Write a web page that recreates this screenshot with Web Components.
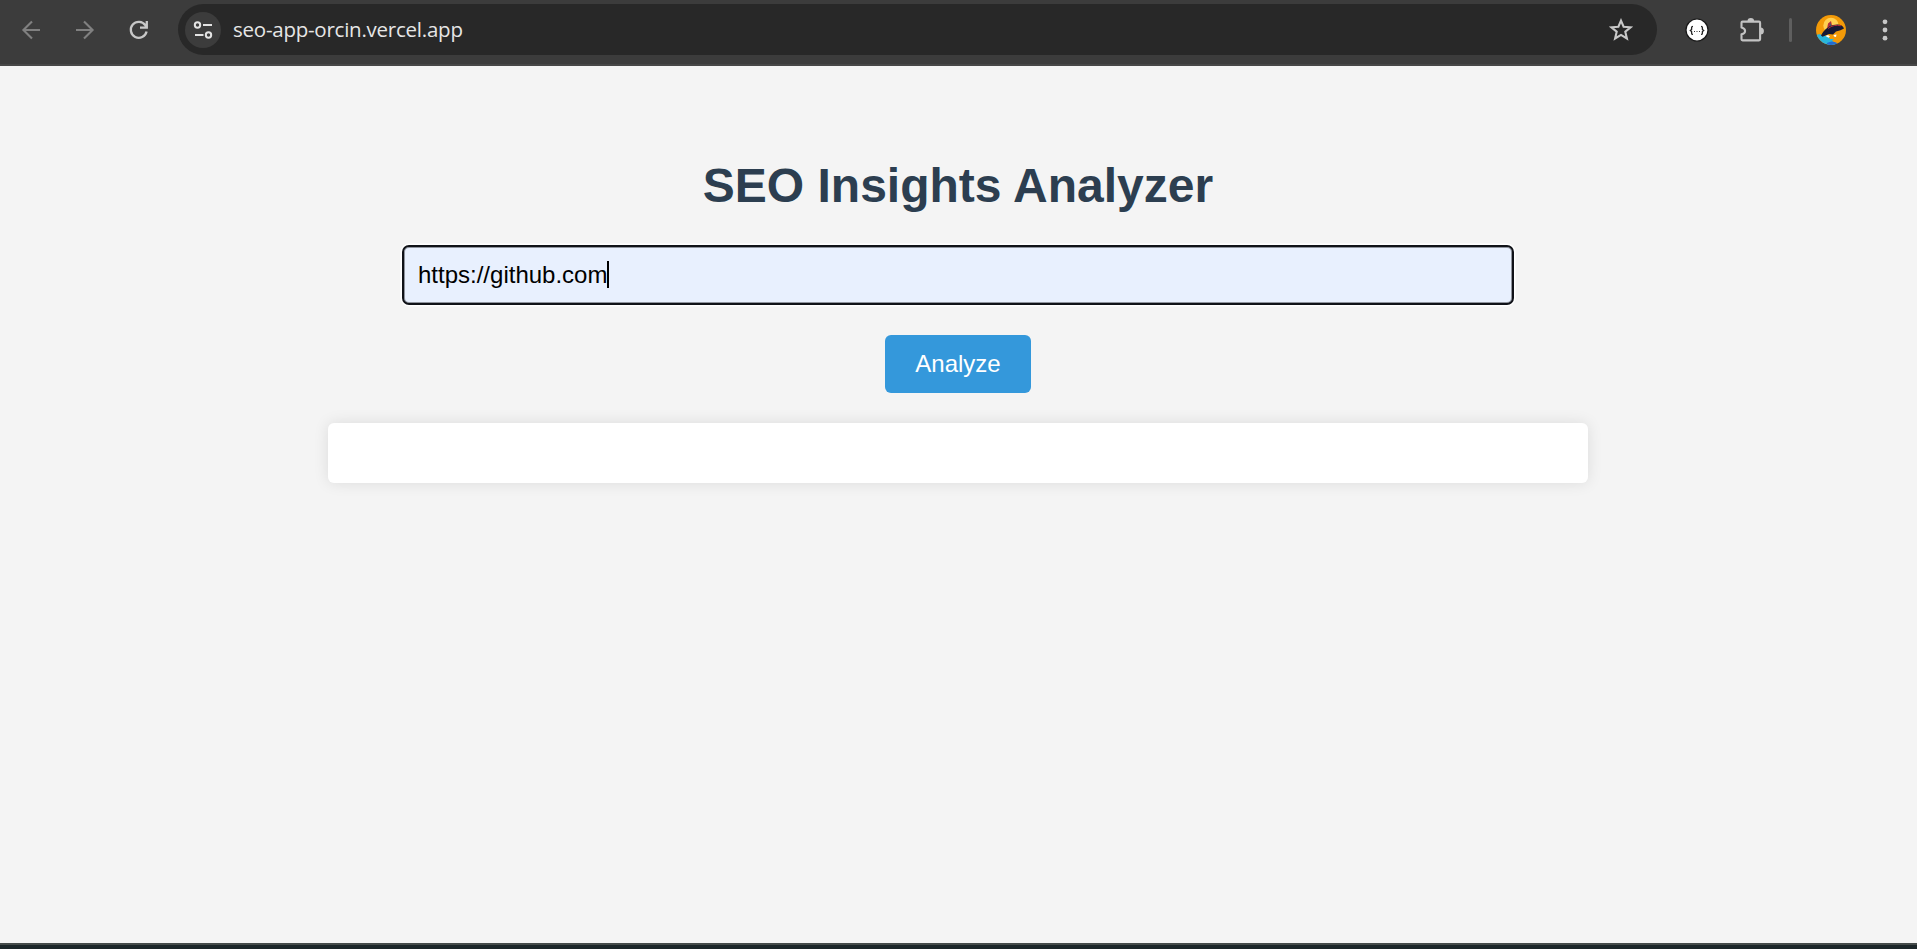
<!DOCTYPE html>
<html lang="en">
<head>
<meta charset="utf-8">
<title>SEO Insights Analyzer</title>
<style>
html,body{margin:0;height:100%;overflow:hidden;background:#f4f4f4}
</style>
</head>
<body>
<browser-window>
  <browser-toolbar slot="toolbar" url="seo-app-orcin.vercel.app"></browser-toolbar>
  <seo-app></seo-app>
</browser-window>
<script>
function define(name, html) {
  const template = document.createElement('template');
  template.innerHTML = html;
  customElements.define(name, class extends HTMLElement {
    constructor() {
      super();
      this.attachShadow({mode: 'open'}).append(template.content.cloneNode(true));
    }
    connectedCallback() {
      const url = this.shadowRoot.querySelector('[data-url]');
      if (url) url.textContent = this.getAttribute('url');
    }
  });
}

define('tool-icon', `
<style>
:host{display:block;flex:none;line-height:0}
::slotted(svg){display:block}
</style><slot></slot>`);

define('browser-toolbar', `
<style>
:host{display:flex;box-sizing:border-box;height:66px;padding:4px 21px 0 20px;background:#3c3c3c;border-bottom:2px solid #474747;align-items:flex-start}
.row{display:flex;align-items:center;height:51px;width:100%}
.nav{display:flex;gap:32px;width:158px;box-sizing:border-box}
.omni{display:flex;align-items:center;box-sizing:border-box;width:1479px;height:51px;border-radius:26px;background:#282828;padding:0 24px 0 7px}
.site{display:flex;align-items:center;justify-content:center;width:36px;height:36px;border-radius:50%;background:#3c3c3c}
.url{flex:1;margin-left:12px;padding-bottom:2px;font:20.5px/28px "Open Sans","Noto Sans",sans-serif;color:#e6e6e6;letter-spacing:-.24px;white-space:nowrap}
.ext{display:flex;align-items:center;flex:1;padding-left:28px}
.sep{width:3px;height:24px;border-radius:2px;background:#5f5f5f;margin:0 24px 0 24px}
</style>
<div class="row">
  <div class="nav">
    <tool-icon><svg width="22" height="22" viewBox="0 0 22 22" fill="none" stroke="#808080" stroke-width="2.1"><path d="M20 11H3.4M12 2.4L3.4 11L12 19.6"/></svg></tool-icon>
    <tool-icon><svg width="22" height="22" viewBox="0 0 22 22" fill="none" stroke="#808080" stroke-width="2.1"><path d="M2 11H18.6M10 2.4L18.6 11L10 19.6"/></svg></tool-icon>
    <tool-icon><svg width="22" height="22" viewBox="0 0 22 22" fill="none" stroke="#c8c8c8" stroke-width="2.3"><path d="M18.6 12.6A8 8 0 1 1 17.4 6.3L18.6 8.2M18.8 2V8.7H12"/></svg></tool-icon>
  </div>
  <div class="omni">
    <div class="site"><svg width="20" height="20" viewBox="0 0 20 20" fill="none" stroke="#e3e3e3" stroke-width="2"><circle cx="4.5" cy="5" r="2.7"/><path d="M10 5H19M2 15H10.5"/><circle cx="15.5" cy="15" r="2.7"/></svg></div>
    <span class="url" data-url></span>
    <tool-icon><svg width="24" height="24" viewBox="0 0 24 24" fill="none" stroke="#c8c8c8" stroke-width="2.1"><path d="M12 2.6L14.6 8.7L21.6 9.3L16.3 13.7L17.9 20.5L12 16.9L6.1 20.5L7.7 13.7L2.4 9.3L9.4 8.7Z"/></svg></tool-icon>
  </div>
  <div class="ext">
    <tool-icon><svg width="24" height="24" viewBox="0 0 24 24"><circle cx="12" cy="12" r="11" fill="#fff" stroke="#171717" stroke-width="1.2"/><g fill="none" stroke="#222" stroke-width="1.3"><path d="M8 8.4Q6.6 8.4 6.6 9.6V11.4L5.3 12.5L6.6 13.6V15.2Q6.6 16.4 8 16.4M16 8.4Q17.4 8.4 17.4 9.6V11.4L18.7 12.5L17.4 13.6V15.2Q17.4 16.4 16 16.4"/></g><path d="M9 13h1v1H9zM11.5 13h1v1h-1zM14 13h1v1h-1z" fill="#333"/></svg></tool-icon>
    <tool-icon style="margin-left:30px"><svg width="26" height="26" viewBox="0 0 26 26"><path d="M3.6 4.6H20Q21.1 4.6 21.1 5.7V22.3Q21.1 23.4 20 23.4H3.6Q2.5 23.4 2.5 22.3V17.3Q6.1 16.5 6.1 14T2.5 10.5V5.7Q2.5 4.6 3.6 4.6Z" fill="none" stroke="#c3c3c3" stroke-width="2.1" stroke-linejoin="round"/><path d="M8.5 4.4A3.3 3.3 0 0 1 15.1 4.4ZM21.4 10.4A3.5 3.5 0 0 1 21.4 17.4Z" fill="#c3c3c3"/></svg></tool-icon>
    <span class="sep"></span>
    <tool-icon><svg width="30" height="30" viewBox="0 0 30 30"><defs><clipPath id="c"><circle cx="15" cy="15" r="15"/></clipPath></defs><g clip-path="url(#c)"><path fill="#f39a08" d="M0 0h30v30H0z"/><circle cx="15" cy="10.5" r="7.7" fill="#ffd052"/><path d="M0 20L4 19L7 21L12 21L14 24L18 24L16 26L20 28V30H0Z" fill="#29b6dc"/><path d="M11 28Q16 25 21 28V30H11Z" fill="#246bd2"/><path d="M11 14L12 8.5L15 6L16 10.5Z" fill="#b52d3b"/><path d="M13 13L14.6 7.5L15 11Z" fill="#2b6078"/><path d="M5 20.5Q9 12.5 17 10Q26 8 28 13.5Q25 15.5 20 16.5L17 19.5L13 19L6.5 21.8Z" fill="#171a35"/><path d="M12 13.5Q18 9 25 10.8" fill="none" stroke="#b52d3b" stroke-width="1"/><path d="M9.5 21L12 20L14 21.5L12.5 22.8ZM17.5 20L20.5 19.6L20 22L18 21.6Z" fill="#fff"/></g></svg></tool-icon>
    <tool-icon style="margin-left:36px"><svg width="6" height="24" viewBox="0 0 6 24" fill="#c7c7c7"><circle cx="3" cy="3.8" r="2.4"/><circle cx="3" cy="12" r="2.4"/><circle cx="3" cy="20.2" r="2.4"/></svg></tool-icon>
  </div>
</div>`);

define('browser-window', `
<style>
:host{display:flex;flex-direction:column;height:949px;width:1917px;background:#f4f4f4}
main{flex:1}
footer{height:4px;background:#1c2629;border-top:2px solid #454b4a}
</style>
<slot name="toolbar"></slot><main><slot></slot></main><footer></footer>`);

define('url-field', `
<style>
:host{display:flex;align-items:center;box-sizing:border-box;width:1112px;height:60px;padding:0 14px;border:2px solid #101218;border-radius:7px;background:#e8f0fe;box-shadow:0 0 0 1.5px #fff,inset 0 0 0 1px #8f949e;font-size:24px;line-height:28px;color:#000}
i{width:2px;height:27px;margin-bottom:1px;background:#000}
</style><slot></slot><i></i>`);

define('action-button', `
<style>
:host{display:flex;align-items:center;justify-content:center;width:146px;height:58px;border-radius:6px;background:#3498db;color:#fff;font-size:24px;line-height:28px}
</style><slot></slot>`);

define('result-card', `
<style>
:host{display:block;width:1260px;height:60px;border-radius:6px;background:#fff;box-shadow:0 0 15px rgba(0,0,0,.1)}
</style><slot></slot>`);

define('seo-app', `
<style>
:host{display:flex;flex-direction:column;align-items:center;width:1916px;font-family:"Liberation Sans",Arial,sans-serif;padding-top:92px;box-sizing:border-box}
h1{margin:0 0 32px;font-size:48px;line-height:55px;font-weight:700;color:#2c3e50}
action-button{margin:30px 0}
</style>
<h1>SEO Insights Analyzer</h1>
<url-field>https://github.com</url-field>
<action-button>Analyze</action-button>
<result-card></result-card>`);
</script>
</body>
</html>
